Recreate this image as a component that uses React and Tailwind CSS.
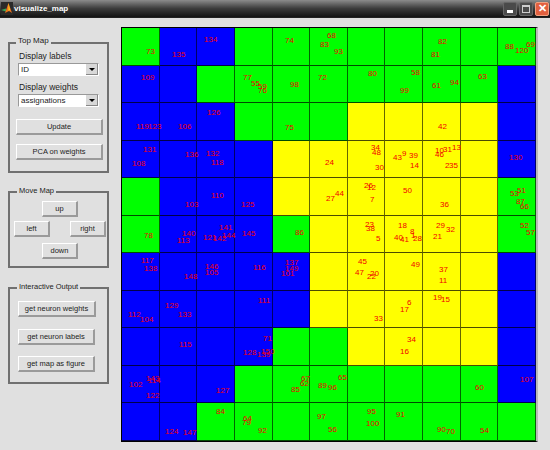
const G = "bg-[#00ff00]";
const B = "bg-[#0000ff]";
const Y = "bg-[#ffff00]";

const rows = [
    "GBBGGGGGGGG",
    "BBGGGGGGGGB",
    "BBBGGGYYYYB",
    "BBBBYYYYYYB",
    "GBBBYYYYYYG",
    "GBBBGYYYYYG",
    "BBBBBYYYYYB",
    "BBBBBYYYYYB",
    "BBBBGGYYYYB",
    "BBBGGGGGGGB",
    "BBGGGGGGGGG",
];
const colors = { G, B, Y };

// [label, center x, center y] in page pixels
const labels = [
    [73, 150, 52], [135, 179, 55], [134, 211, 40], [109, 148, 78], [77, 247, 78], [55, 255, 84],
    [59, 262, 87], [76, 262, 91], [119, 143, 127], [123, 155, 127], [106, 185, 127], [126, 214, 113],
    [74, 289, 41], [68, 331, 36], [83, 324, 45], [93, 338, 52], [82, 442, 42], [81, 435, 55],
    [88, 509, 47], [120, 522, 51], [69, 530, 45], [98, 294, 85], [72, 322, 78], [80, 372, 74],
    [58, 415, 73], [99, 404, 91], [61, 436, 86], [94, 454, 83], [63, 482, 77], [75, 289, 128],
    [42, 442, 127], [131, 150, 150], [136, 192, 155], [132, 213, 154], [118, 218, 163], [108, 139, 164],
    [110, 218, 196], [103, 192, 205], [125, 248, 205], [78, 148, 236], [140, 189, 234], [113, 184, 241],
    [141, 226, 228], [144, 229, 236], [121, 210, 238], [142, 220, 239], [145, 249, 234], [117, 148, 261],
    [138, 151, 269], [146, 212, 267], [105, 212, 273], [148, 191, 277], [116, 260, 268], [130, 516, 158],
    [24, 329, 163], [34, 375, 148], [48, 376, 153], [9, 404, 154], [43, 397, 158], [39, 413, 156],
    [14, 414, 166], [30, 379, 168], [10, 439, 151], [46, 439, 155], [31, 447, 150], [13, 456, 148],
    [2, 447, 166], [35, 453, 166], [26, 368, 186], [12, 371, 188], [7, 372, 200], [27, 330, 199],
    [44, 339, 194], [50, 407, 191], [36, 444, 205], [53, 514, 194], [51, 521, 191], [87, 520, 202],
    [66, 524, 207], [86, 299, 233], [23, 369, 225], [38, 370, 229], [5, 378, 239], [18, 402, 226],
    [8, 412, 232], [40, 398, 238], [41, 404, 240], [1, 413, 236], [28, 417, 239], [29, 440, 226],
    [32, 450, 230], [21, 437, 237], [52, 524, 226], [57, 530, 233], [137, 292, 263], [149, 292, 269],
    [101, 288, 274], [45, 362, 262], [47, 359, 273], [20, 374, 274], [22, 371, 277], [49, 415, 265],
    [37, 443, 270], [11, 443, 281], [19, 437, 298], [15, 445, 300], [6, 409, 303], [17, 404, 310],
    [33, 378, 319], [111, 265, 301], [112, 135, 315], [104, 147, 320], [129, 172, 306], [133, 185, 315],
    [115, 186, 345], [71, 267, 339], [128, 250, 353], [139, 264, 355], [150, 268, 352], [102, 136, 385],
    [143, 153, 379], [114, 155, 381], [122, 153, 396], [127, 223, 391], [84, 220, 412], [64, 247, 419],
    [79, 246, 423], [92, 262, 431], [124, 172, 432], [147, 190, 433], [34, 411, 340], [16, 404, 352],
    [67, 305, 379], [62, 304, 384], [85, 295, 390], [89, 322, 386], [96, 332, 388], [65, 342, 378],
    [60, 479, 388], [107, 527, 380], [97, 321, 417], [56, 332, 430], [95, 371, 412], [100, 373, 424],
    [91, 400, 415], [90, 441, 430], [70, 450, 432], [54, 484, 431],
];

function PushButton({ children, className }) {
    return (
        <button className={`block h-[16px] bg-[#e0e0e0] border-t border-l border-t-white border-l-white border-b-2 border-r-2 border-b-[#9a9a9a] border-r-[#9a9a9a] text-[7.5px] leading-none whitespace-nowrap text-[#222] ${className}`}>
            {children}
        </button>
    );
}

function Dropdown({ value }) {
    return (
        <div className="ml-[2px] w-[81px] h-[13px] bg-white border border-t-[#999] border-l-[#999] border-b-white border-r-white flex items-center justify-between">
            <span className="pl-[2px] text-[8px] leading-none text-[#222]">{value}</span>
            <div className="w-[12px] h-full bg-[#d8d8d8] border-b border-r border-b-[#888] border-r-[#888] flex items-center justify-center">
                <div className="w-0 h-0 border-l-[3px] border-r-[3px] border-t-[3px] border-l-transparent border-r-transparent border-t-black"></div>
            </div>
        </div>
    );
}

function Panel({ title, className, titleClass, children }) {
    return (
        <div className={`relative w-[101px] border-2 border-[#707070] ${className}`}>
            <span className={`absolute bg-[#e0e0e0] px-[2px] leading-[10px] whitespace-nowrap text-[#222] ${titleClass}`}>{title}</span>
            {children}
        </div>
    );
}

function WindowButton({ children, className }) {
    return (
        <div className={`w-[14px] h-[14px] rounded-[2px] flex items-center justify-center ${className}`}>
            {children}
        </div>
    );
}

export default function App() {
    return (
        <div className="w-[550px] h-[450px] overflow-hidden bg-[#e0e0e0] font-['Liberation_Sans',Arial,sans-serif]">
            <div className="h-[18px] bg-gradient-to-b from-[#8c8c8c] via-[#3c3c3c] to-[#141414] flex items-center border-b border-[#222]">
                <svg width="12" height="13" viewBox="0 0 12 13" className="ml-[1px]">
                    <rect width="12" height="13" fill="#2a2a2a" />
                    <path d="M0 8 L5 6.5 L5 9.5 Z" fill="#3aa655" />
                    <path d="M4 11 L7.5 1 L11 11 L8 9 Z" fill="#e8721e" />
                    <path d="M7.5 1 L9 8 L7.5 9 Z" fill="#f8d020" />
                </svg>
                <span className="ml-[1px] text-[8px] font-bold text-white leading-none">visualize_map</span>
                <div className="ml-auto mr-[1px] flex gap-[2px]">
                    <WindowButton className="bg-[#4a4a4a] border border-[#666]">
                        <div className="w-[6px] h-[3px] bg-white mt-[5px]"></div>
                    </WindowButton>
                    <WindowButton className="bg-[#4a4a4a] border border-[#666]">
                        <div className="w-[8px] h-[8px] border border-[#ccc] border-t-2"></div>
                    </WindowButton>
                    <WindowButton className="bg-[#e2603f] border border-[#f0a080]">
                        <span className="text-white text-[11px] font-bold leading-none">✕</span>
                    </WindowButton>
                </div>
            </div>
            <div className="flex items-start">
                <div className="w-[121px] shrink-0 pl-[8px] pt-[24px] flex flex-col">
                    <Panel title="Top Map" titleClass="left-[6px] top-[-8px] text-[8px]" className="h-[131px] px-[6px] pt-[7px]">
                        <div className="ml-[3px] text-[8.5px] leading-[11px] text-[#222]">Display labels</div>
                        <div className="mt-[1px]">
                            <Dropdown value="ID" />
                        </div>
                        <div className="ml-[3px] mt-[6px] text-[8.5px] leading-[11px] text-[#222]">Display weights</div>
                        <div className="mt-[1px]">
                            <Dropdown value="assignations" />
                        </div>
                        <PushButton className="mt-[12px] w-[87px]">Update</PushButton>
                        <PushButton className="mt-[9px] w-[87px]">PCA on weights</PushButton>
                    </Panel>
                    <Panel title="Move Map" titleClass="left-[7px] top-[-7px] text-[7.5px]" className="mt-[18px] h-[77px] pl-[4px] pr-[1px] pt-[8px]">
                        <PushButton className="w-[36px] ml-[28px]">up</PushButton>
                        <div className="mt-[4px] flex justify-between">
                            <PushButton className="w-[36px]">left</PushButton>
                            <PushButton className="w-[36px]">right</PushButton>
                        </div>
                        <PushButton className="mt-[6px] w-[36px] ml-[28px]">down</PushButton>
                    </Panel>
                    <Panel title="Interactive Output" titleClass="left-[7px] top-[-7px] text-[7.5px]" className="mt-[19px] h-[97px] pl-[8px] pt-[12px]">
                        <PushButton className="w-[78px]">get neuron weights</PushButton>
                        <PushButton className="mt-[12px] w-[77px]">get neuron labels</PushButton>
                        <PushButton className="mt-[11px] w-[77px]">get map as figure</PushButton>
                    </Panel>
                </div>
                <div className="relative mt-[9px] w-[417px] h-[415px] border-r-2 border-r-[#b8b8b8] grid grid-cols-11 grid-rows-11 border-l border-t border-b border-l-black border-t-black border-b-black">
                    {rows.flatMap((row, r) =>
                        row.split("").map((c, i) => (
                            <div key={`${r}-${i}`} className={`${colors[c]} border-r border-b border-r-black/60 border-b-black/70`}></div>
                        ))
                    )}
                    {labels.map(([id, x, y], i) => (
                        <span
                            key={i}
                            className="absolute text-[8px] leading-none text-[#f00000]"
                            style={{ left: Math.round(x - 122 - String(id).length * 2.2), top: y - 32 }}
                        >
                            {id}
                        </span>
                    ))}
                </div>
            </div>
        </div>
    );
}
